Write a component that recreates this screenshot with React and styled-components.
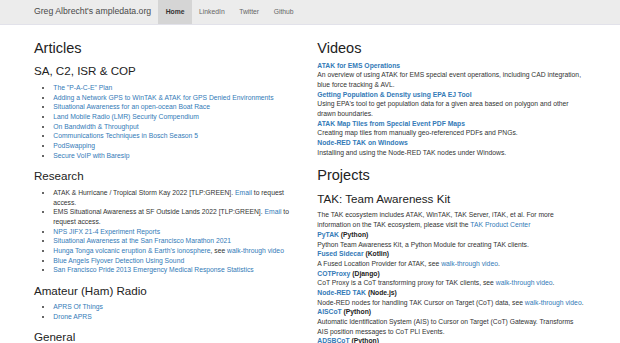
import React from "react";
import styled, { createGlobalStyle } from "styled-components";

// the page is laid out at 1280px and zoomed down to the 620px window
const SCALE = 620 / 1280;

const GlobalStyle = createGlobalStyle`
  html {
    overflow: hidden;
  }
  body {
    margin: 0;
    background: #fff;
    font-family: "Liberation Sans", Arial, Helvetica, sans-serif;
    font-size: 14px;
    line-height: 1.42857143;
    color: #333;
  }
  * {
    box-sizing: border-box;
  }
`;

const articles = [
  'The "P-A-C-E" Plan',
  "Adding a Network GPS to WinTAK & ATAK for GPS Denied Environments",
  "Situational Awareness for an open-ocean Boat Race",
  "Land Mobile Radio (LMR) Security Compendium",
  "On Bandwidth & Throughput",
  "Communications Techniques in Bosch Season 5",
  "PodSwapping",
  "Secure VoIP with Baresip",
];

const videos = [
  {
    title: "ATAK for EMS Operations",
    text: "An overview of using ATAK for EMS special event operations, including CAD integration, blue force tracking & AVL.",
  },
  {
    title: "Getting Population & Density using EPA EJ Tool",
    text: "Using EPA's tool to get population data for a given area based on polygon and other drawn boundaries.",
  },
  {
    title: "ATAK Map Tiles from Special Event PDF Maps",
    text: "Creating map tiles from manually geo-referenced PDFs and PNGs.",
  },
  {
    title: "Node-RED TAK on Windows",
    text: "Installing and using the Node-RED TAK nodes under Windows.",
  },
];

const projects = [
  {
    name: "PyTAK",
    lang: "Python",
    text: "Python Team Awareness Kit, a Python Module for creating TAK clients.",
  },
  {
    name: "Fused Sidecar",
    lang: "Kotlin",
    text: "A Fused Location Provider for ATAK, see ",
    video: true,
  },
  {
    name: "COTProxy",
    lang: "Django",
    text: "CoT Proxy is a CoT transforming proxy for TAK clients, see ",
    video: true,
  },
  {
    name: "Node-RED TAK",
    lang: "Node.js",
    text: "Node-RED nodes for handling TAK Cursor on Target (CoT) data, see ",
    video: true,
  },
  {
    name: "AISCoT",
    lang: "Python",
    // nbsp keeps "AIS position" together so the line breaks after "Transforms"
    text: "Automatic Identification System (AIS) to Cursor on Target (CoT) Gateway. Transforms AIS\u00a0position messages to CoT PLI Events.",
  },
  {
    name: "ADSBCoT",
    lang: "Python",
    text: "Automatic Dependent Surveillance-Broadcast (ADS-B) to Cursor on Target (CoT) Gateway.",
  },
];

function App() {
  return (
    <Page>
      <GlobalStyle />
      <Navbar>
        <NavInner>
          <Brand href="#">Greg Albrecht's ampledata.org</Brand>
          <NavList>
            <li>
              <NavLink href="#" $active>
                Home
              </NavLink>
            </li>
            <li>
              <NavLink href="#">LinkedIn</NavLink>
            </li>
            <li>
              <NavLink href="#">Twitter</NavLink>
            </li>
            <li>
              <NavLink href="#">Github</NavLink>
            </li>
          </NavList>
        </NavInner>
      </Navbar>

      <Container>
        <Column>
          <H2>Articles</H2>
          <H3>SA, C2, ISR &amp; COP</H3>
          <List>
            {articles.map((a) => (
              <li key={a}>
                <Link href="#">{a}</Link>
              </li>
            ))}
          </List>

          <H3>Research</H3>
          <List>
            <li>
              ATAK &amp; Hurricane / Tropical Storm Kay 2022 [TLP:GREEN].{" "}
              <Link href="#">Email</Link> to request access.
            </li>
            <li>
              EMS Situational Awareness at SF Outside Lands 2022 [TLP:GREEN].{" "}
              <Link href="#">Email</Link> to request access.
            </li>
            <li>
              <Link href="#">NPS JIFX 21-4 Experiment Reports</Link>
            </li>
            <li>
              <Link href="#">
                Situational Awareness at the San Francisco Marathon 2021
              </Link>
            </li>
            <li>
              <Link href="#">
                Hunga Tonga volcanic eruption &amp; Earth's ionosphere
              </Link>
              , see <Link href="#">walk-through video</Link>
            </li>
            <li>
              <Link href="#">Blue Angels Flyover Detection Using Sound</Link>
            </li>
            <li>
              <Link href="#">
                San Francisco Pride 2013 Emergency Medical Response Statistics
              </Link>
            </li>
          </List>

          <H3>Amateur (Ham) Radio</H3>
          <List>
            <li>
              <Link href="#">APRS Of Things</Link>
            </li>
            <li>
              <Link href="#">Drone APRS</Link>
            </li>
          </List>

          <H3>General</H3>
          <List>
            <li>
              <Link href="#">Notes</Link>
            </li>
          </List>
        </Column>

        <Column>
          <H2>Videos</H2>
          <DefList>
            {videos.map((v) => (
              <React.Fragment key={v.title}>
                <dt>
                  <Link href="#">{v.title}</Link>
                </dt>
                <dd>{v.text}</dd>
              </React.Fragment>
            ))}
          </DefList>

          <H2>Projects</H2>
          <H3>TAK: Team Awareness Kit</H3>
          <Intro>
            The TAK ecosystem includes ATAK, WinTAK, TAK Server, iTAK, et al.
            For more information on the TAK ecosystem, please visit the{" "}
            <Link href="#">TAK Product Center</Link>
          </Intro>
          <DefList>
            {projects.map((p) => (
              <React.Fragment key={p.name}>
                <dt>
                  <Link href="#">{p.name}</Link> ({p.lang})
                </dt>
                <dd>
                  {p.text}
                  {p.video && (
                    <>
                      <Link href="#">walk-through video</Link>.
                    </>
                  )}
                </dd>
              </React.Fragment>
            ))}
          </DefList>
        </Column>
      </Container>
    </Page>
  );
}

const Page = styled.div`
  width: 1280px;
  zoom: ${SCALE};
`;

const Navbar = styled.nav`
  background: #ececec;
  border-bottom: 1px solid #e2e2ea;
  margin-bottom: 10px;
`;

const NavInner = styled.div`
  width: 1170px;
  margin: 0 auto;
  padding: 0 15px;
  display: flex;
  height: 50px;
`;

const Brand = styled.a`
  margin-left: -15px;
  padding: 15px;
  font-size: 18px;
  line-height: 20px;
  color: #4a4a4a;
  text-decoration: none;
`;

const NavList = styled.ul`
  list-style: none;
  margin: 0;
  padding: 0;
  display: flex;
`;

const NavLink = styled.a`
  display: block;
  padding: 15px;
  line-height: 20px;
  text-decoration: none;
  color: ${(p) => (p.$active ? "#333" : "#666")};
  font-weight: ${(p) => (p.$active ? 700 : 400)};
  background: ${(p) => (p.$active ? "#d5d5d5" : "transparent")};
`;

const Container = styled.main`
  width: 1170px;
  margin: 0 auto;
  padding: 0 15px;
  display: grid;
  grid-template-columns: 1fr 1fr;
  column-gap: 30px;
`;

const Column = styled.section`
  min-width: 0;
`;

const H2 = styled.h2`
  font-size: 30px;
  font-weight: 500;
  line-height: 1.1;
  margin: 20px 0 10px;
  color: #222;
`;

const H3 = styled.h3`
  font-size: 24px;
  font-weight: 500;
  line-height: 1.1;
  margin: 20px 0 10px;
  color: #222;
`;

const List = styled.ul`
  margin: 0 0 10px;
  padding-left: 40px;
`;

const Link = styled.a`
  color: #337ab7;
  text-decoration: none;
`;

const Intro = styled.p`
  margin: 0;
`;

const DefList = styled.dl`
  margin: 0 0 20px;

  dt {
    font-weight: 700;
    color: #222;
  }

  dd {
    margin: 0;
  }
`;

export default App;
